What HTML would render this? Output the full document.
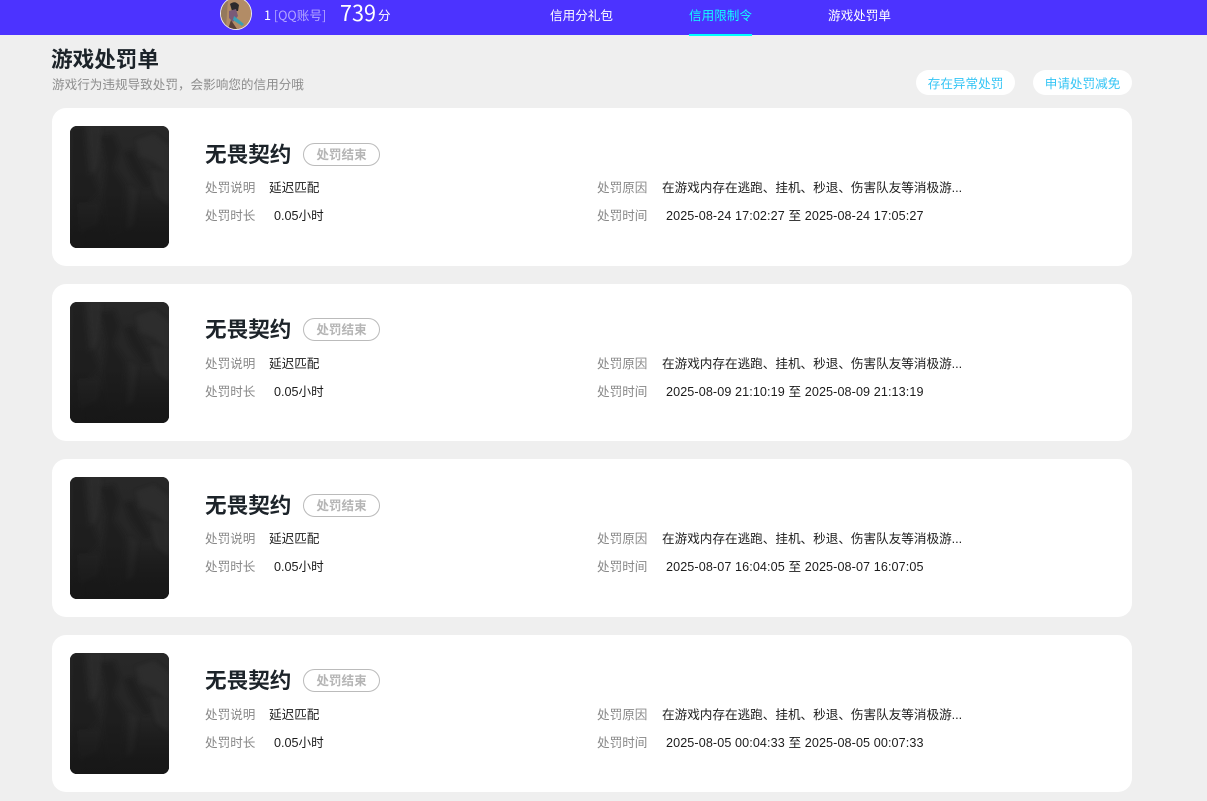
<!DOCTYPE html>
<html lang="zh-CN">
<head>
<meta charset="utf-8">
<title>游戏处罚单</title>
<style>
*{box-sizing:border-box;margin:0;padding:0}
html,body{width:1207px;height:801px;overflow:hidden;background:#efefef}
body{position:relative;font-family:"Liberation Sans","Noto Sans CJK SC",sans-serif;color:#1c2329}
.abs,.abs *{white-space:nowrap}
.abs{position:absolute}
.top{left:0;top:0;width:1207px;height:35px;background:#4c33ff}
.nav{top:6px;font-size:12.6px;line-height:18px;color:#fff;font-family:"Noto Sans CJK SC",sans-serif}
.under{left:689px;top:34px;width:63px;height:2px;background:#0ff}
.btn{top:70px;height:25px;border-radius:13px;background:#fff;color:#35c5f5;font-size:12.6px;line-height:25px;text-align:center;font-family:"Noto Sans CJK SC",sans-serif}
.card{left:52px;width:1080px;background:#fff;border-radius:14px}
.pic{position:absolute;left:18px;top:18px;width:99px;height:122px;border-radius:7px;overflow:hidden;background:#1c1c1c}
.odd .pic{height:121px}
.name{position:absolute;left:153px;top:30px;font-size:21.6px;line-height:32px;font-weight:700;color:#1c2329;font-family:"Noto Sans CJK SC",sans-serif}
.tag{position:absolute;left:251px;top:35px;width:77px;height:23px;border:1px solid #bbb;border-radius:12px;color:#b5b5b5;font-size:12.6px;line-height:20px;font-weight:700;text-align:center;font-family:"Noto Sans CJK SC",sans-serif}
.odd .tag{top:34px}
.odd .name{top:29px}
.l,.v{position:absolute;font-size:12.6px;line-height:18px;font-family:"Liberation Sans","Noto Sans CJK SC",sans-serif;margin-top:1px}
.l{color:#888}
.v{color:#1c1c1c}
.t{letter-spacing:.1px}
</style>
</head>
<body>
<svg width="0" height="0" style="position:absolute">
<defs>
<linearGradient id="g" x1="0" y1="0" x2="0" y2="1">
<stop offset="0" stop-color="#282828"/><stop offset=".5" stop-color="#252525"/><stop offset=".8" stop-color="#1c1c1c"/><stop offset="1" stop-color="#171717"/>
</linearGradient>
<linearGradient id="f" x1="0" y1="0" x2="0" y2="1">
<stop offset=".55" stop-color="#1a1a1a" stop-opacity="0"/><stop offset="1" stop-color="#171717" stop-opacity=".95"/>
</linearGradient>
<filter id="b"><feGaussianBlur stdDeviation="1.8"/></filter>
<symbol id="art" viewBox="0 0 99 122">
<rect width="99" height="122" fill="url(#g)"/>
<g filter="url(#b)" opacity=".6">
<path d="M0 0H14L20 60L12 122H0Z" fill="#1f1f1f"/>
<path d="M18 0L32 0L28 40L22 50Z" fill="#2f2f2f"/>
<path d="M30 10L44 8L50 24L44 42L56 60L52 108L38 114L32 70L36 40Z" fill="#1e1e1e"/>
<path d="M66 14L84 8L99 20V48L84 36L70 30Z" fill="#303030"/>
<path d="M54 26L64 24L82 60L74 62L60 42Z" fill="#1a1a1a"/>
<path d="M80 44L99 46V80L86 70Z" fill="#2d2d2d"/>
<path d="M6 58L22 46L30 66L18 78L4 74Z" fill="#1a1a1a"/>
<path d="M8 78L30 76L28 98L10 106Z" fill="#272727"/>
<path d="M60 60L68 64L64 100L56 104Z" fill="#292929"/>
</g>
<rect width="99" height="122" fill="url(#f)"/>
</symbol>
</defs>
</svg>

<div class="abs top"></div>
<div class="abs" style="left:220px;top:-3px;width:32px;height:33px;border-radius:50%;border:1px solid #eee;overflow:hidden;background:#b08a62">
<svg width="30" height="31" viewBox="0 0 30 31" style="display:block">
<rect width="30" height="31" fill="#b28c66"/>
<path d="M0 0H7L5 31H0Z" fill="#94795c"/>
<path d="M9 6Q14 2 18 7L17 13L11 13Z" fill="#2c2a2c"/>
<path d="M8 13L15 11L17 18L12 24L8 20Z" fill="#7a5a78"/>
<path d="M13 18L23 26L21 28L12 22Z" fill="#3aa0b5"/>
<path d="M10 22L16 31H7Z" fill="#5a4038"/>
</svg>
</div>
<div class="abs" style="left:264px;top:6px;font-size:12.6px;line-height:18px;color:#fff;font-family:'Noto Sans CJK SC',sans-serif">1 <span style="color:#b3a6ff">[QQ账号]</span></div>
<div class="abs" style="left:340px;top:-1px;font-size:21.6px;line-height:28px;color:#fff;font-family:'Noto Sans CJK SC',sans-serif">739</div>
<div class="abs" style="left:378px;top:6px;font-size:12.6px;line-height:18px;color:#fff;font-family:'Noto Sans CJK SC',sans-serif">分</div>
<div class="abs nav" style="left:550px">信用分礼包</div>
<div class="abs nav" style="left:689px;color:#1ff">信用限制令</div>
<div class="abs nav" style="left:828px">游戏处罚单</div>
<div class="abs under"></div>

<div class="abs" style="left:51px;top:43px;font-size:21.6px;line-height:32px;font-weight:700;color:#1c2329;font-family:'Noto Sans CJK SC',sans-serif">游戏处罚单</div>
<div class="abs" style="left:52px;top:75px;font-size:12.6px;line-height:18px;color:#8d8d8d;font-family:'Noto Sans CJK SC',sans-serif">游戏行为违规导致处罚，会影响您的信用分哦</div>
<div class="abs btn" style="left:916px;width:99px">存在异常处罚</div>
<div class="abs btn" style="left:1033px;width:99px">申请处罚减免</div>

<div class="abs card" style="top:108px;height:158px">
<div class="pic"><svg width="99" height="122"><use href="#art"/></svg></div>
<div class="name">无畏契约</div><div class="tag">处罚结束</div>
<div class="l" style="left:153px;top:70px">处罚说明</div><div class="v" style="left:217px;top:70px">延迟匹配</div>
<div class="l" style="left:153px;top:98px">处罚时长</div><div class="v" style="left:222px;top:98px">0.05小时</div>
<div class="l" style="left:545px;top:70px">处罚原因</div><div class="v" style="left:610px;top:70px">在游戏内存在逃跑、挂机、秒退、伤害队友等消极游...</div>
<div class="l" style="left:545px;top:98px">处罚时间</div><div class="v t" style="left:614px;top:98px">2025-08-24 17:02:27 至 2025-08-24 17:05:27</div>
</div>

<div class="abs card odd" style="top:284px;height:157px">
<div class="pic"><svg width="99" height="122"><use href="#art"/></svg></div>
<div class="name">无畏契约</div><div class="tag">处罚结束</div>
<div class="l" style="left:153px;top:70px">处罚说明</div><div class="v" style="left:217px;top:70px">延迟匹配</div>
<div class="l" style="left:153px;top:98px">处罚时长</div><div class="v" style="left:222px;top:98px">0.05小时</div>
<div class="l" style="left:545px;top:70px">处罚原因</div><div class="v" style="left:610px;top:70px">在游戏内存在逃跑、挂机、秒退、伤害队友等消极游...</div>
<div class="l" style="left:545px;top:98px">处罚时间</div><div class="v t" style="left:614px;top:98px">2025-08-09 21:10:19 至 2025-08-09 21:13:19</div>
</div>

<div class="abs card" style="top:459px;height:158px">
<div class="pic"><svg width="99" height="122"><use href="#art"/></svg></div>
<div class="name">无畏契约</div><div class="tag">处罚结束</div>
<div class="l" style="left:153px;top:70px">处罚说明</div><div class="v" style="left:217px;top:70px">延迟匹配</div>
<div class="l" style="left:153px;top:98px">处罚时长</div><div class="v" style="left:222px;top:98px">0.05小时</div>
<div class="l" style="left:545px;top:70px">处罚原因</div><div class="v" style="left:610px;top:70px">在游戏内存在逃跑、挂机、秒退、伤害队友等消极游...</div>
<div class="l" style="left:545px;top:98px">处罚时间</div><div class="v t" style="left:614px;top:98px">2025-08-07 16:04:05 至 2025-08-07 16:07:05</div>
</div>

<div class="abs card odd" style="top:635px;height:157px">
<div class="pic"><svg width="99" height="122"><use href="#art"/></svg></div>
<div class="name">无畏契约</div><div class="tag">处罚结束</div>
<div class="l" style="left:153px;top:70px">处罚说明</div><div class="v" style="left:217px;top:70px">延迟匹配</div>
<div class="l" style="left:153px;top:98px">处罚时长</div><div class="v" style="left:222px;top:98px">0.05小时</div>
<div class="l" style="left:545px;top:70px">处罚原因</div><div class="v" style="left:610px;top:70px">在游戏内存在逃跑、挂机、秒退、伤害队友等消极游...</div>
<div class="l" style="left:545px;top:98px">处罚时间</div><div class="v t" style="left:614px;top:98px">2025-08-05 00:04:33 至 2025-08-05 00:07:33</div>
</div>
</body>
</html>
